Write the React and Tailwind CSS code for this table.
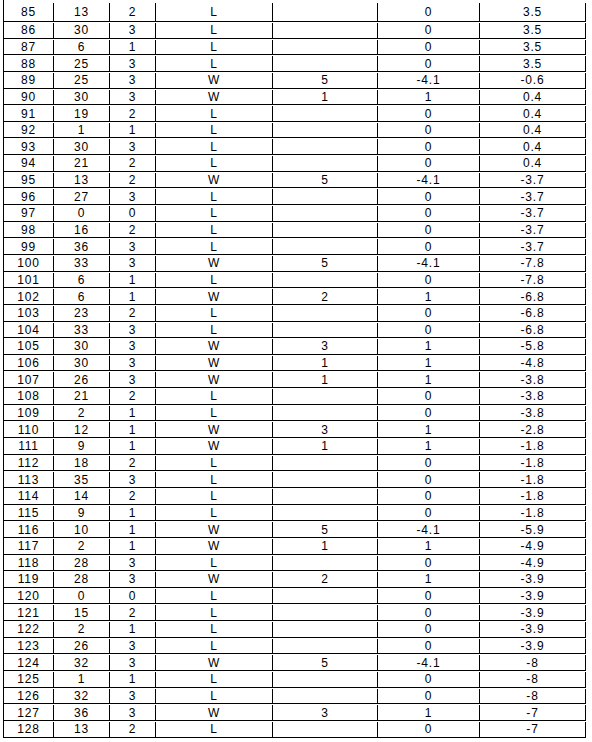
const rows = [
  [85, 13, 2, 'L', '', '0', '3.5'],
  [86, 30, 3, 'L', '', '0', '3.5'],
  [87, 6, 1, 'L', '', '0', '3.5'],
  [88, 25, 3, 'L', '', '0', '3.5'],
  [89, 25, 3, 'W', '5', '-4.1', '-0.6'],
  [90, 30, 3, 'W', '1', '1', '0.4'],
  [91, 19, 2, 'L', '', '0', '0.4'],
  [92, 1, 1, 'L', '', '0', '0.4'],
  [93, 30, 3, 'L', '', '0', '0.4'],
  [94, 21, 2, 'L', '', '0', '0.4'],
  [95, 13, 2, 'W', '5', '-4.1', '-3.7'],
  [96, 27, 3, 'L', '', '0', '-3.7'],
  [97, 0, 0, 'L', '', '0', '-3.7'],
  [98, 16, 2, 'L', '', '0', '-3.7'],
  [99, 36, 3, 'L', '', '0', '-3.7'],
  [100, 33, 3, 'W', '5', '-4.1', '-7.8'],
  [101, 6, 1, 'L', '', '0', '-7.8'],
  [102, 6, 1, 'W', '2', '1', '-6.8'],
  [103, 23, 2, 'L', '', '0', '-6.8'],
  [104, 33, 3, 'L', '', '0', '-6.8'],
  [105, 30, 3, 'W', '3', '1', '-5.8'],
  [106, 30, 3, 'W', '1', '1', '-4.8'],
  [107, 26, 3, 'W', '1', '1', '-3.8'],
  [108, 21, 2, 'L', '', '0', '-3.8'],
  [109, 2, 1, 'L', '', '0', '-3.8'],
  [110, 12, 1, 'W', '3', '1', '-2.8'],
  [111, 9, 1, 'W', '1', '1', '-1.8'],
  [112, 18, 2, 'L', '', '0', '-1.8'],
  [113, 35, 3, 'L', '', '0', '-1.8'],
  [114, 14, 2, 'L', '', '0', '-1.8'],
  [115, 9, 1, 'L', '', '0', '-1.8'],
  [116, 10, 1, 'W', '5', '-4.1', '-5.9'],
  [117, 2, 1, 'W', '1', '1', '-4.9'],
  [118, 28, 3, 'L', '', '0', '-4.9'],
  [119, 28, 3, 'W', '2', '1', '-3.9'],
  [120, 0, 0, 'L', '', '0', '-3.9'],
  [121, 15, 2, 'L', '', '0', '-3.9'],
  [122, 2, 1, 'L', '', '0', '-3.9'],
  [123, 26, 3, 'L', '', '0', '-3.9'],
  [124, 32, 3, 'W', '5', '-4.1', '-8'],
  [125, 1, 1, 'L', '', '0', '-8'],
  [126, 32, 3, 'L', '', '0', '-8'],
  [127, 36, 3, 'W', '3', '1', '-7'],
  [128, 13, 2, 'L', '', '0', '-7'],
];

const widths = ['w-[50px]', 'w-[56px]', 'w-[46px]', 'w-[117px]', 'w-[105px]', 'w-[102px]', 'w-[106px]'];

export default function App() {
  return (
    <div className="w-[592px] h-[742px] bg-white overflow-hidden">
      <div
        className="ml-[3px] w-[583px] border-l border-black text-[12px] tracking-[0.8px] text-black"
        style={{ fontFamily: '"Liberation Sans", Arial, sans-serif' }}
      >
        {rows.map((r, i) => (
          <div
            key={r[0]}
            className={`flex border-b border-black ${i === 0 ? 'h-[22px] pt-[3px]' : 'h-[16.65px] pt-[1px]'}`}
          >
            {r.map((v, j) => (
              <div
                key={j}
                className={`${widths[j]} shrink-0 border-r border-black flex items-center justify-center leading-none`}
              >
                {v}
              </div>
            ))}
          </div>
        ))}
      </div>
    </div>
  );
}
